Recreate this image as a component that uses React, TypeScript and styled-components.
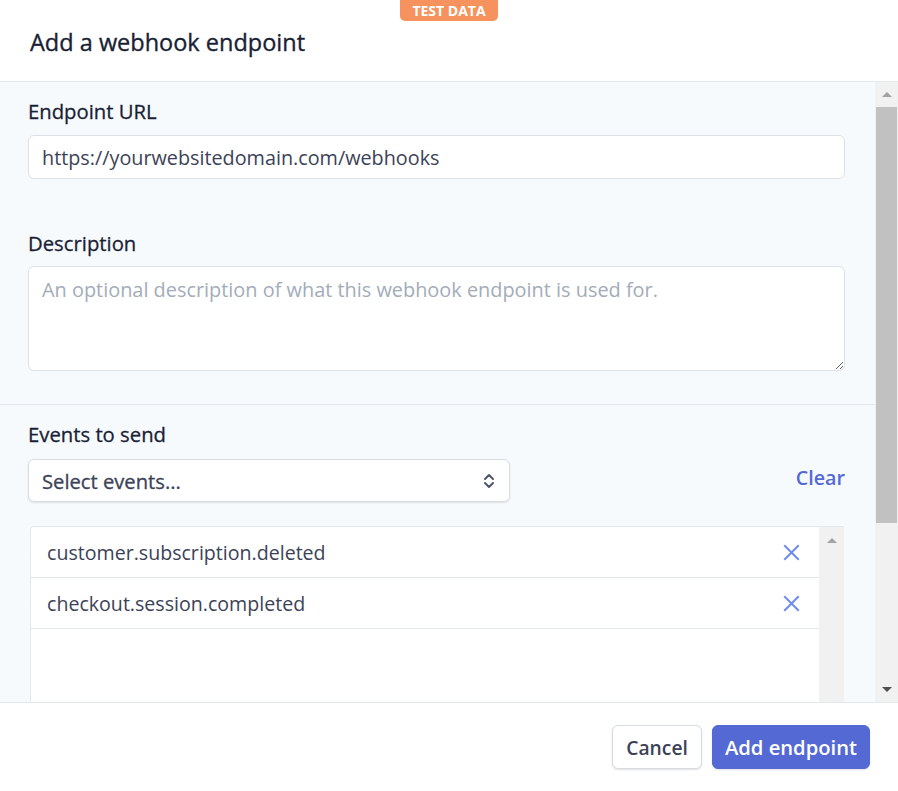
import React from "react";
import styled, { createGlobalStyle } from "styled-components";

const GlobalStyle = createGlobalStyle`
  html, body { margin: 0; padding: 0; background: #ffffff; }
  body { font-family: "Open Sans", "Noto Sans", sans-serif; -webkit-font-smoothing: antialiased; }
  * { box-sizing: border-box; }
`;

const Modal = styled.div`
  width: 898px;
  height: 791px;
  display: flex;
  flex-direction: column;
  background: #ffffff;
  overflow: hidden;
`;

const Header = styled.header`
  height: 82px;
  flex: none;
  display: flex;
  flex-direction: column;
  padding: 0 30px;
  border-bottom: 1px solid #e3e8ee;
`;

const Badge = styled.div`
  align-self: center;
  height: 21px;
  padding: 0 12px;
  display: flex;
  align-items: center;
  background: #f5925e;
  color: #ffffff;
  font-size: 14px;
  font-weight: 700;
  border-radius: 0 0 5px 5px;
`;

const Title = styled.h1`
  margin: 6px 0 0;
  font-size: 23.5px;
  line-height: 30px;
  font-weight: 400;
  -webkit-text-stroke: 0.35px #1a1f36;
  color: #1a1f36;
`;

const Body = styled.div`
  height: 620px;
  flex: none;
  display: flex;
  background: #f7fafc;
  overflow: hidden;
`;

const Content = styled.div`
  flex: 1;
  display: flex;
  flex-direction: column;
  overflow: hidden;
`;

const Section = styled.section<{ $last?: boolean }>`
  padding: ${(p) => (p.$last ? "17px 30px 0 28px" : "17px 30px 33px 28px")};
  border-bottom: ${(p) => (p.$last ? "none" : "1px solid #e3e8ee")};
  display: flex;
  flex-direction: column;
  flex: ${(p) => (p.$last ? "1" : "none")};
  min-height: 0;
`;

const Label = styled.label<{ $gap?: number }>`
  display: block;
  margin-top: ${(p) => p.$gap ?? 0}px;
  font-size: 20.3px;
  line-height: 24px;
  font-weight: 400;
  -webkit-text-stroke: 0.3px #1a1f36;
  color: #1a1f36;
`;

const TextInput = styled.input`
  margin-top: 12px;
  width: 100%;
  height: 44px;
  padding: 0 13px;
  border: 1px solid #dde2e8;
  border-radius: 6px;
  background: #ffffff;
  font-family: inherit;
  font-size: 19.8px;
  color: #3c4257;
  outline: none;
`;

const TextArea = styled.textarea`
  margin-top: 11px;
  width: 100%;
  height: 105px;
  padding: 11px 13px;
  border: 1px solid #dde2e8;
  border-radius: 6px;
  background: #ffffff;
  font-family: inherit;
  font-size: 19.9px;
  line-height: 24px;
  color: #3c4257;
  outline: none;
  resize: vertical;
  &::placeholder { color: #a3acb9; }
`;

const SelectRow = styled.div`
  margin-top: 13px;
  display: flex;
  align-items: center;
`;

const SelectBox = styled.div`
  width: 482px;
  height: 43px;
  display: flex;
  align-items: center;
  justify-content: space-between;
  padding: 1px 14px 0 13px;
  background: #ffffff;
  border: 1px solid #d8dde3;
  border-radius: 6px;
  box-shadow: 0 1px 2px rgba(0, 0, 0, 0.1);
  font-size: 20.2px;
  font-weight: 400;
  -webkit-text-stroke: 0.3px #3c4257;
  color: #3c4257;
`;

const ClearLink = styled.span`
  margin-left: auto;
  margin-top: -7px;
  font-size: 19.7px;
  font-weight: 600;
  color: #5469d4;
`;

const EventList = styled.div`
  margin: 24px 1px 0 2px;
  flex: 1;
  display: flex;
  border-top: 1px solid #e3e8ee;
  border-left: 1px solid #e3e8ee;
  border-radius: 4px 0 0 0;
  background: #ffffff;
  min-height: 0;
`;

const Rows = styled.div`
  flex: 1;
  display: flex;
  flex-direction: column;
`;

const EventRow = styled.div`
  height: 51px;
  flex: none;
  display: flex;
  align-items: center;
  justify-content: space-between;
  padding: 0 19px 0 16px;
  border-bottom: 1px solid #e3e8ee;
  font-size: 19.6px;
  color: #3c4257;
`;

const Track = styled.div<{ $w: number }>`
  width: ${(p) => p.$w}px;
  flex: none;
  display: flex;
  flex-direction: column;
  background: #f1f1f1;
`;

const ArrowBox = styled.div<{ $h: number }>`
  height: ${(p) => p.$h}px;
  flex: none;
  display: flex;
  align-items: center;
  justify-content: center;
`;

const Arrow = styled.div<{ $down?: boolean; $dark?: boolean }>`
  width: 0;
  height: 0;
  border-left: 5px solid transparent;
  border-right: 5px solid transparent;
  ${(p) =>
    p.$down
      ? `border-top: 5px solid ${p.$dark ? "#505050" : "#a3a3a3"};`
      : `border-bottom: 5px solid ${p.$dark ? "#505050" : "#a3a3a3"};`}
`;

const Thumb = styled.div`
  margin: 1px 1px 0 1px;
  height: 416px;
  flex: none;
  background: #c1c1c1;
`;

const Spacer = styled.div`
  flex: 1;
`;

const Footer = styled.footer`
  flex: 1;
  display: flex;
  justify-content: flex-end;
  align-items: flex-start;
  gap: 10px;
  padding: 22px 28px 0 0;
  border-top: 1px solid #e3e8ee;
  background: #ffffff;
`;

const Button = styled.button<{ $primary?: boolean }>`
  height: 44px;
  padding: ${(p) => (p.$primary ? "0 12px" : "0 13px")};
  border-radius: 6px;
  font-family: inherit;
  font-size: ${(p) => (p.$primary ? "20.2px" : "19.3px")};
  font-weight: 600;
  cursor: pointer;
  border: 1px solid ${(p) => (p.$primary ? "#5469d4" : "#d5dbe1")};
  background: ${(p) => (p.$primary ? "#5469d4" : "#ffffff")};
  color: ${(p) => (p.$primary ? "#ffffff" : "#3c4257")};
  box-shadow: 0 1px 2px rgba(0, 0, 0, 0.12);
`;

const Chevrons = () => (
  <svg width="12" height="18" viewBox="0 0 12 18" fill="none" stroke="#4f566b" strokeWidth="2" strokeLinecap="round" strokeLinejoin="round">
    <polyline points="2,7 6,3 10,7" />
    <polyline points="2,11 6,15 10,11" />
  </svg>
);

const CloseIcon = () => (
  <svg width="17" height="17" viewBox="0 0 17 17" fill="none" stroke="#6c8cef" strokeWidth="2" strokeLinecap="square">
    <line x1="2" y1="2" x2="15" y2="15" />
    <line x1="15" y1="2" x2="2" y2="15" />
  </svg>
);

const events = ["customer.subscription.deleted", "checkout.session.completed"];

export default function App() {
  return (
    <>
      <GlobalStyle />
      <Modal>
        <Header>
          <Badge>TEST DATA</Badge>
          <Title>Add a webhook endpoint</Title>
        </Header>
        <Body>
          <Content>
            <Section>
              <Label>Endpoint URL</Label>
              <TextInput readOnly value="https://yourwebsitedomain.com/webhooks" />
              <Label $gap={52}>Description</Label>
              <TextArea placeholder="An optional description of what this webhook endpoint is used for." />
            </Section>
            <Section $last>
              <Label>Events to send</Label>
              <SelectRow>
                <SelectBox>
                  <span>Select events...</span>
                  <Chevrons />
                </SelectBox>
                <ClearLink>Clear</ClearLink>
              </SelectRow>
              <EventList>
                <Rows>
                  {events.map((e) => (
                    <EventRow key={e}>
                      <span>{e}</span>
                      <CloseIcon />
                    </EventRow>
                  ))}
                </Rows>
                <Track $w={25}>
                  <ArrowBox $h={26}>
                    <Arrow />
                  </ArrowBox>
                </Track>
              </EventList>
            </Section>
          </Content>
          <Track $w={23}>
            <ArrowBox $h={24}>
              <Arrow />
            </ArrowBox>
            <Thumb />
            <Spacer />
            <ArrowBox $h={26}>
              <Arrow $down $dark />
            </ArrowBox>
          </Track>
        </Body>
        <Footer>
          <Button>Cancel</Button>
          <Button $primary>Add endpoint</Button>
        </Footer>
      </Modal>
    </>
  );
}
